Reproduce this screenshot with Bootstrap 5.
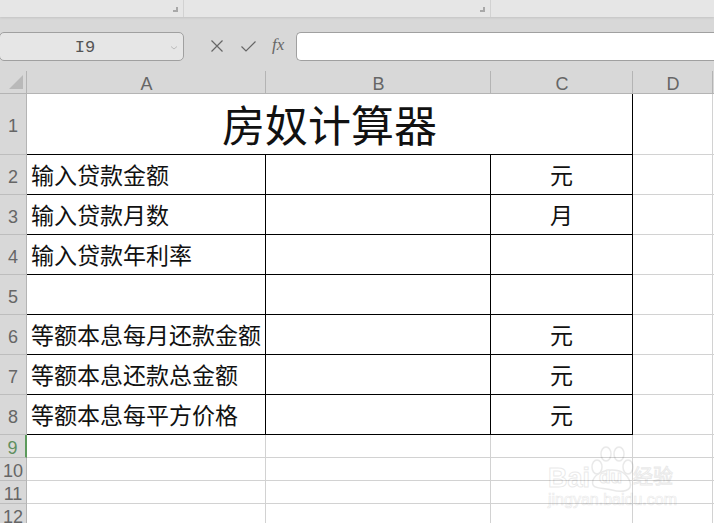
<!DOCTYPE html>
<html lang="zh"><head><meta charset="utf-8"><title>房奴计算器</title>
<link href="https://cdn.jsdelivr.net/npm/bootstrap@5.3.0/dist/css/bootstrap.min.css" rel="stylesheet">
<style>
html,body{margin:0;height:523px;overflow:hidden;background:#fff;font-family:"Noto Sans CJK SC","Liberation Sans",sans-serif}
.app{position:relative;width:714px;height:523px;overflow:hidden}
.ribbon{height:17px;background:#e6e6e6;box-shadow:0 1px 2px #c4c4c4;position:relative;display:flex}
.seg{border-right:1px solid #d2d2d2;position:relative;height:17px}
.s1{width:184px}.s2{width:307px}
.seg::after{content:"";position:absolute;right:5px;top:7px;width:5px;height:5px;border-right:2px solid #a8a8a8;border-bottom:2px solid #a8a8a8}
.s3{flex:1;border:0}.s3::after{display:none}
.fbar{height:54px;background:#d8d8d8;display:flex;align-items:center;padding-top:4px}
.namebox{width:185px;height:29px;margin-left:-1px;background:#e6e6e6;border:1px solid #a0a0a0;border-radius:5px;display:flex;align-items:center;justify-content:center;padding:2px 13px 0 0;font:17px "Liberation Mono",monospace;color:#555;position:relative}
.namebox svg{position:absolute;right:5px;top:13px}
.ficons{width:112px;display:flex;align-items:center;padding-left:26px;gap:16px;color:#666}
.fxt{font:italic 17px "Liberation Serif",serif;color:#666;margin-left:-1px;padding-bottom:2px}
.finput{flex:1;height:29px;background:#fff;border:1px solid #a0a0a0;border-right:0;border-radius:5px 0 0 5px}
.sheet{border-collapse:separate;border-spacing:0;table-layout:fixed;width:820px}
.sheet th{background:#d8d8d8;font-weight:400;color:#666;font-family:"Liberation Sans",sans-serif;text-align:center;padding:0;border-right:1px solid #b4b4b4;border-bottom:1px solid #b4b4b4;overflow:hidden;white-space:nowrap;line-height:1}
.sheet thead th{height:23px;font-size:18px;padding:3px 0 0 1px}
.sheet thead .corner{position:relative}
.tri{position:absolute;left:9px;bottom:4px;width:0;height:0;border-style:solid;border-width:0 0 14px 14px;border-color:transparent transparent #b9b9b9 transparent}
.sheet td{padding:0 0 1px 4px;font-size:23px;line-height:1;color:#111;border-right:1px solid #d2d2d2;border-bottom:1px solid #d2d2d2;white-space:nowrap;overflow:visible}
.sheet tbody th{border-bottom-color:#bdbdbd;font-size:18px;padding-top:4px}
.rt{height:40px}.rs{height:23px}
.sheet td.bx{border-right:1px solid #000;border-bottom:1px solid #000}
.sheet td.cn{text-align:center;padding-left:0}
.sheet td.ttl{font-size:43px;text-align:center;padding:0 0 2px 0}
.sheet th.act{color:#5f8f5f;border-right:2px solid #5c9a5c}
.wm{position:absolute;left:546px;top:445px;width:150px;height:72px;opacity:.1;pointer-events:none}
.wm .bd{position:absolute;left:2px;top:18px;font:700 27px "Liberation Sans",sans-serif;color:#fff;-webkit-text-stroke:1px #333}
.wm .du{position:absolute;left:53px;top:21px;font:700 19px "Liberation Sans",sans-serif;color:#fff;-webkit-text-stroke:1px #333}
.wm .jy{position:absolute;left:87px;top:21px;font-size:20px;line-height:1;color:#fff;-webkit-text-stroke:1px #333;white-space:nowrap}
.wm .ur{position:absolute;left:2px;top:46px;font:16px "Liberation Sans",sans-serif;color:#fff;-webkit-text-stroke:.7px #333;white-space:nowrap}
.wm svg{position:absolute;left:42px;top:1px}
</style></head>
<body>
<div class="app">
<div class="ribbon"><div class="seg s1"></div><div class="seg s2"></div><div class="seg s3"></div></div>
<div class="fbar">
 <div class="namebox">I9<svg width="8" height="4" viewBox="0 0 8 4"><path d="M1 0.5 4 3 7 0.5" fill="none" stroke="#bbb"/></svg></div>
 <div class="ficons">
  <svg width="14" height="14" viewBox="0 0 14 14"><path d="M1.5 1.5 12.5 12.5M12.5 1.5 1.5 12.5" stroke="#666" stroke-width="1.2" fill="none"/></svg>
  <svg width="17" height="13" viewBox="0 0 17 13"><path d="M1.5 6.5 6 11 15.5 1.5" stroke="#666" stroke-width="1.2" fill="none"/></svg>
  <span class="fxt">fx</span>
 </div>
 <div class="finput"></div>
</div>
<table class="sheet">
<colgroup><col style="width:27px"><col style="width:239px"><col style="width:225px"><col style="width:142px"><col style="width:80px"><col style="width:107px"></colgroup>
<thead><tr><th class="corner"><span class="tri"></span></th><th>A</th><th>B</th><th>C</th><th>D</th><th></th></tr></thead>
<tbody>
<tr style="height:61px"><th>1</th><td colspan="3" class="bx ttl">房奴计算器</td><td></td><td></td></tr>
<tr class="rt"><th>2</th><td class="bx">输入贷款金额</td><td class="bx"></td><td class="bx cn">元</td><td></td><td></td></tr>
<tr class="rt"><th>3</th><td class="bx">输入贷款月数</td><td class="bx"></td><td class="bx cn">月</td><td></td><td></td></tr>
<tr class="rt"><th>4</th><td class="bx">输入贷款年利率</td><td class="bx"></td><td class="bx cn"></td><td></td><td></td></tr>
<tr class="rt"><th>5</th><td class="bx"></td><td class="bx"></td><td class="bx cn"></td><td></td><td></td></tr>
<tr class="rt"><th>6</th><td class="bx">等额本息每月还款金额</td><td class="bx"></td><td class="bx cn">元</td><td></td><td></td></tr>
<tr class="rt"><th>7</th><td class="bx">等额本息还款总金额</td><td class="bx"></td><td class="bx cn">元</td><td></td><td></td></tr>
<tr class="rt"><th>8</th><td class="bx">等额本息每平方价格</td><td class="bx"></td><td class="bx cn">元</td><td></td><td></td></tr>
<tr class="rs"><th class="act">9</th><td></td><td></td><td></td><td></td><td></td></tr>
<tr class="rs"><th>10</th><td></td><td></td><td></td><td></td><td></td></tr>
<tr class="rs"><th>11</th><td></td><td></td><td></td><td></td><td></td></tr>
<tr class="rs"><th>12</th><td></td><td></td><td></td><td></td><td></td></tr>
</tbody></table>
<div class="wm">
 <svg width="46" height="48" viewBox="0 0 46 48" fill="none" stroke="#333" stroke-width="1.5"><ellipse cx="9" cy="21" rx="5" ry="7"/><ellipse cx="18" cy="8" rx="5" ry="7"/><ellipse cx="31" cy="8" rx="5" ry="7"/><ellipse cx="40" cy="21" rx="5" ry="7"/><path d="M5 34C8 27 17 24 24 24S39 27 42 36 34 47 24 44 2 44 5 34Z"/></svg>
 <span class="bd">Bai</span><span class="du">du</span><span class="jy">经验</span><span class="ur">jingyan.baidu.com</span>
</div>
</div>
</body></html>
